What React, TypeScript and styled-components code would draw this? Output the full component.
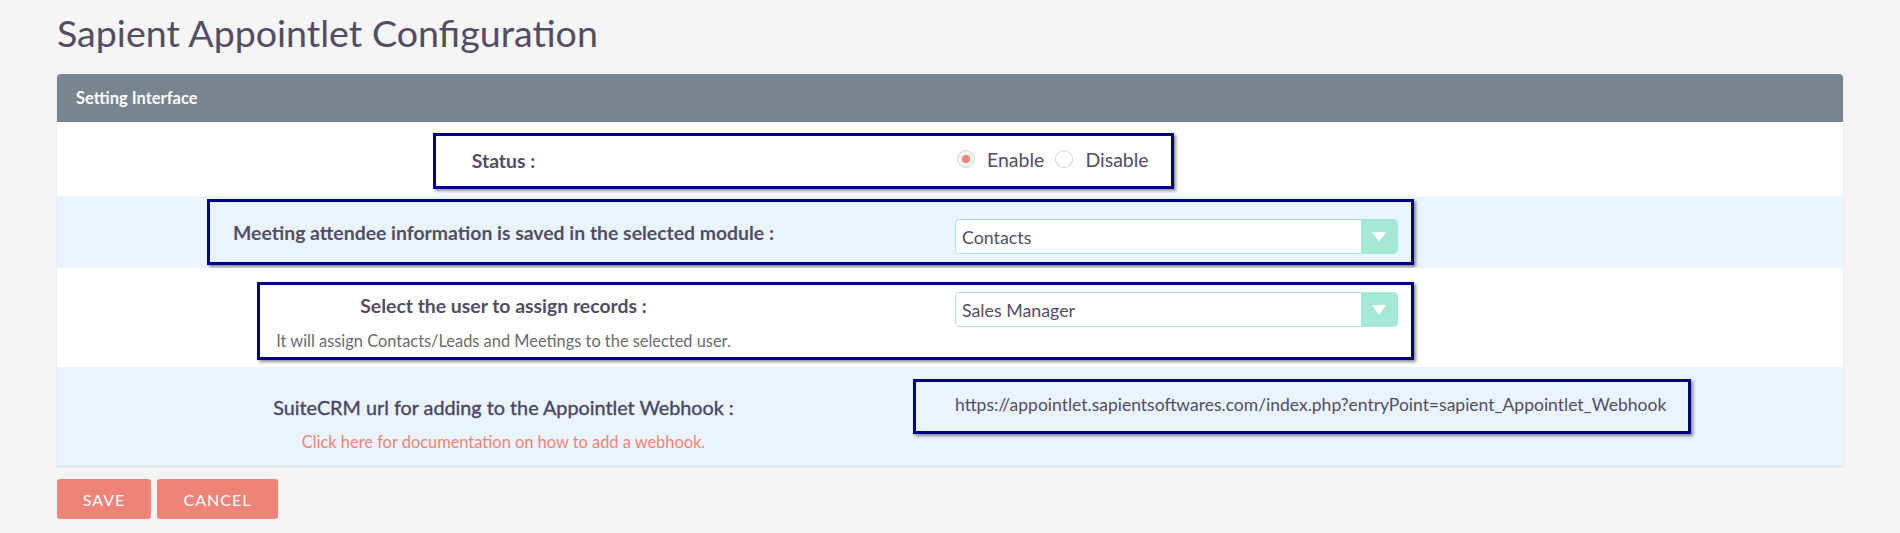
import styled, { createGlobalStyle } from "styled-components";

const GlobalStyle = createGlobalStyle`
  body {
    margin: 0;
    background: #f5f5f5;
    font-family: Lato, "Open Sans", sans-serif;
    color: #534d64;
  }
`;

const Page = styled.div`
  padding: 0 57px;
`;

const Title = styled.h2`
  margin: 0;
  padding-top: 8px;
  height: 66px;
  font-size: 37.6px;
  font-weight: 400;
  color: #534d64;
  line-height: 50px;
`;

const Panel = styled.section`
  background: #fff;
  border-radius: 4px 4px 0 0;
  box-shadow: 0 1px 2px rgba(0, 0, 0, 0.12);
`;

const PanelHeader = styled.div`
  height: 48px;
  background: #778591;
  border-radius: 4px 4px 0 0;
  display: flex;
  align-items: center;
  padding-left: 19px;
  color: #fff;
  font-size: 16.5px;
  font-weight: 700;
`;

const Row = styled.div<{ $h: number; $pad: number; $alt?: boolean }>`
  position: relative;
  display: grid;
  grid-template-columns: 1fr 1fr;
  align-items: start;
  height: ${(p) => p.$h}px;
  padding-top: ${(p) => p.$pad}px;
  box-sizing: border-box;
  background: ${(p) => (p.$alt ? "#e9f4fe" : "#fff")};
`;

const LabelCell = styled.div`
  text-align: center;
  padding-top: 2px;
`;

const Label = styled.div<{ $light?: boolean }>`
  font-size: ${(p) => (p.$light ? "19.8px" : "19.4px")};
  font-weight: ${(p) => (p.$light ? 400 : 700)};
  line-height: 24px;
  color: ${(p) => (p.$light ? "#4a4560" : "#534d64")};
  -webkit-text-stroke: ${(p) => (p.$light ? "0.35px #4a4560" : "0")};
`;

const Hint = styled.div<{ $link?: boolean }>`
  margin-top: 13px;
  font-size: 16.4px;
  line-height: 20px;
  color: ${(p) => (p.$link ? "#f08377" : "#6b6b6b")};
  cursor: ${(p) => (p.$link ? "pointer" : "default")};
`;

const ValueCell = styled.div`
  padding-left: 5px;
  display: flex;
  align-items: center;
`;

const RadioGroup = styled.div`
  display: flex;
  align-items: center;
  height: 24px;
  font-size: 19.5px;
  padding-left: 2px;
`;

const Radio = styled.span<{ $on?: boolean }>`
  width: 16px;
  height: 16px;
  border-radius: 50%;
  border: 1px solid #d6d6d6;
  background: ${(p) => (p.$on ? "#f2f2f2" : "#fff")};
  display: inline-flex;
  align-items: center;
  justify-content: center;
  margin-right: 12px;
  &::after {
    content: "";
    width: 8px;
    height: 8px;
    border-radius: 50%;
    background: ${(p) => (p.$on ? "#f08377" : "transparent")};
  }
`;

const RadioText = styled.span`
  margin-right: 11px;
  color: #534d64;
`;

const Select = styled.div`
  width: 443px;
  height: 35px;
  box-sizing: border-box;
  border: 1px solid #a5e8d6;
  border-radius: 4px;
  background: #fff;
  display: flex;
  align-items: center;
  overflow: hidden;
  font-size: 17.8px;
  color: #534d64;
`;

const SelectText = styled.span`
  flex: 1;
  padding-left: 6px;
`;

const SelectArrow = styled.span`
  width: 36px;
  align-self: stretch;
  background: #a5e8d6;
  display: flex;
  align-items: center;
  justify-content: center;
`;

const UrlText = styled.div`
  font-size: 17.5px;
  line-height: 24px;
  color: #534d64;
`;

const Mark = styled.div<{ $l: number; $t: number; $w: number; $h: number }>`
  position: absolute;
  left: ${(p) => p.$l}px;
  top: ${(p) => p.$t}px;
  width: ${(p) => p.$w}px;
  height: ${(p) => p.$h}px;
  box-sizing: border-box;
  border: 3px solid #000085;
  box-shadow: 2px 2px 3px rgba(0, 0, 0, 0.45);
  pointer-events: none;
`;

const Actions = styled.div`
  display: flex;
  gap: 6px;
  padding-top: 13px;
`;

const Button = styled.button<{ $w: number }>`
  width: ${(p) => p.$w}px;
  height: 40px;
  border: none;
  border-radius: 3px;
  background: #f08377;
  color: #fff;
  font-family: Lato, sans-serif;
  font-size: 16px;
  letter-spacing: 1px;
  text-transform: uppercase;
  cursor: pointer;
`;

function Arrow() {
  return (
    <svg width="14" height="10" viewBox="0 0 14 10">
      <path d="M0 0 H14 L7 10 Z" fill="#fff" />
    </svg>
  );
}

function App() {
  return (
    <Page>
      <GlobalStyle />
      <Title>Sapient Appointlet Configuration</Title>
      <Panel>
        <PanelHeader>Setting Interface</PanelHeader>

        <Row $h={74} $pad={25}>
          <LabelCell>
            <Label>Status :</Label>
          </LabelCell>
          <ValueCell>
            <RadioGroup>
              <Radio $on />
              <RadioText>Enable</RadioText>
              <Radio />
              <RadioText>Disable</RadioText>
            </RadioGroup>
          </ValueCell>
          <Mark $l={376} $t={11} $w={741} $h={56} />
        </Row>

        <Row $h={72} $pad={23} $alt>
          <LabelCell>
            <Label>Meeting attendee information is saved in the selected module :</Label>
          </LabelCell>
          <ValueCell>
            <Select>
              <SelectText>Contacts</SelectText>
              <SelectArrow>
                <Arrow />
              </SelectArrow>
            </Select>
          </ValueCell>
          <Mark $l={150} $t={3} $w={1207} $h={66} />
        </Row>

        <Row $h={99} $pad={24}>
          <LabelCell>
            <Label>Select the user to assign records :</Label>
            <Hint>It will assign Contacts/Leads and Meetings to the selected user.</Hint>
          </LabelCell>
          <ValueCell>
            <Select>
              <SelectText>Sales Manager</SelectText>
              <SelectArrow>
                <Arrow />
              </SelectArrow>
            </Select>
          </ValueCell>
          <Mark $l={200} $t={14} $w={1157} $h={78} />
        </Row>

        <Row $h={99} $pad={26} $alt>
          <LabelCell>
            <Label $light>SuiteCRM url for adding to the Appointlet Webhook :</Label>
            <Hint $link>Click here for documentation on how to add a webhook.</Hint>
          </LabelCell>
          <ValueCell>
            <UrlText>
              https://appointlet.sapientsoftwares.com/index.php?entryPoint=sapient_Appointlet_Webhook
            </UrlText>
          </ValueCell>
          <Mark $l={856} $t={12} $w={778} $h={55} />
        </Row>
      </Panel>
      <Actions>
        <Button $w={94}>Save</Button>
        <Button $w={121}>Cancel</Button>
      </Actions>
    </Page>
  );
}

export default App;
